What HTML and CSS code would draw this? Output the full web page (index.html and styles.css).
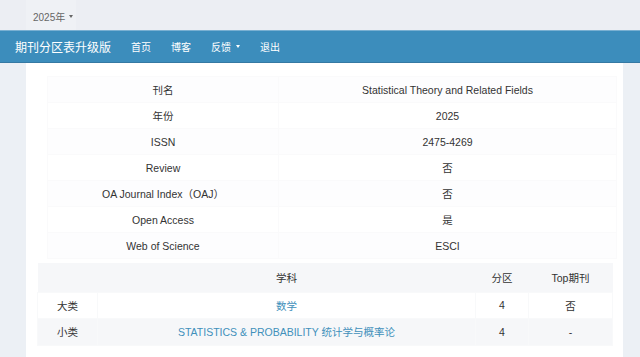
FILE: index.html
```html
<!DOCTYPE html>
<html lang="zh">
<head>
<meta charset="utf-8">
<title>期刊分区表升级版</title>
<link rel="stylesheet" href="styles.css">
</head>
<body>
<div class="topbar">
  <div class="year-box"><span class="year">2025年</span><span class="caret caret-grey"></span></div>
</div>
<nav class="navbar">
  <span class="brand">期刊分区表升级版</span>
  <a class="nav-item">首页</a>
  <a class="nav-item">博客</a>
  <a class="nav-item">反馈<span class="caret caret-white"></span></a>
  <a class="nav-item">退出</a>
</nav>
<main class="page">
  <div class="container">
    <table class="info">
      <colgroup><col class="c-label"><col class="c-value"></colgroup>
      <tr><td>刊名</td><td>Statistical Theory and Related Fields</td></tr>
      <tr><td>年份</td><td>2025</td></tr>
      <tr><td>ISSN</td><td>2475-4269</td></tr>
      <tr><td>Review</td><td>否</td></tr>
      <tr><td>OA Journal Index（OAJ）</td><td>否</td></tr>
      <tr><td>Open Access</td><td>是</td></tr>
      <tr><td>Web of Science</td><td>ESCI</td></tr>
    </table>
    <table class="subjects">
      <colgroup><col class="s1"><col class="s2"><col class="s3"><col class="s4"></colgroup>
      <tr class="head"><th></th><th>学科</th><th>分区</th><th>Top期刊</th></tr>
      <tr class="row1"><td>大类</td><td><a class="link">数学</a></td><td>4</td><td>否</td></tr>
      <tr class="row2"><td>小类</td><td><a class="link">STATISTICS &amp; PROBABILITY 统计学与概率论</a></td><td>4</td><td>-</td></tr>
    </table>
  </div>
</main>
</body>
</html>
```
FILE: styles.css
```css
* { box-sizing: border-box; }
html, body { margin: 0; padding: 0; }
body {
  font-family: "Liberation Sans", "Noto Sans CJK SC", sans-serif;
  color: #333;
  background: #ecf0f5;
  width: 640px;
  height: 357px;
  overflow: hidden;
}
.topbar {
  height: 30px;
  background: #eceef3;
  display: flex;
}
.year-box {
  margin-left: 26px;
  width: 50px;
  background: #eff1f5;
  padding-left: 7px;
  padding-top: 3px;
  display: flex;
  align-items: center;
  font-size: 10px;
  color: #666;
}
.caret {
  display: inline-block;
  width: 0;
  height: 0;
  border-left: 2.5px solid transparent;
  border-right: 2.5px solid transparent;
  margin-left: 4px;
  vertical-align: middle;
}
.caret-grey { border-top: 3px solid #666; }
.caret-white { border-top: 3px solid #fff; margin-left: 5px; }
.navbar {
  height: 33px;
  background: #3c8dbc;
  border-top: 1px solid #79b0d2;
  border-bottom: 1px solid #3579a3;
  display: flex;
  align-items: center;
  padding-left: 15px;
  color: #fff;
}
.brand {
  font-size: 12px;
  padding-right: 10px;
}
.nav-item {
  font-size: 10px;
  padding: 0 10px;
  display: flex;
  align-items: center;
}
.page {
  height: 294px;
  display: flex;
}
.container {
  margin-left: 26px;
  width: 597px;
  background: #fff;
  padding-top: 13px;
}
table {
  border-collapse: collapse;
  font-size: 10.5px;
  table-layout: fixed;
}
.info {
  margin-left: 21px;
  width: 570px;
}
.info .c-label { width: 231px; }
.info td {
  height: 26px;
  padding: 0;
  text-align: center;
  border: 1px solid #fafafb;
}
.info tr:nth-child(odd) td { background: #fdfdfe; }
.subjects {
  margin-top: 4px;
  margin-left: 11px;
  width: 575px;
}
.subjects .s1 { width: 60px; }
.subjects .s2 { width: 378px; }
.subjects .s3 { width: 53px; }
.subjects .s4 { width: 84px; }
.subjects th {
  font-weight: normal;
  height: 29px;
  background: #f6f7f9;
  text-align: center;
  padding: 0;
}
.subjects td {
  height: 26px;
  padding: 0;
  text-align: center;
  border: 1px solid #f8f9fa;
}
.subjects .row2 td { background: #f6f7f9; height: 27px; }
.link { color: #4190bb; }
```
